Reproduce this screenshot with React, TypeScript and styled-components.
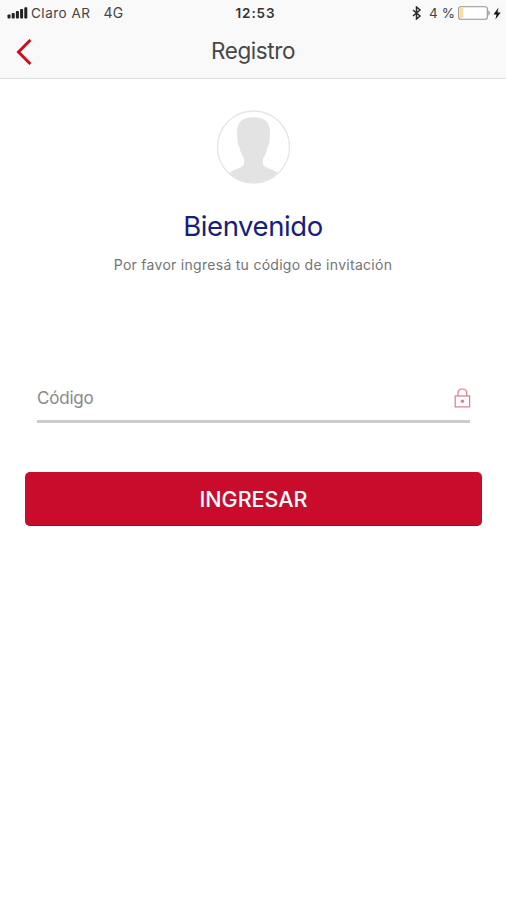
import React from "react";
import styled, { createGlobalStyle } from "styled-components";

const GlobalStyle = createGlobalStyle`
  * { box-sizing: border-box; }
  body { margin: 0; background: #fff; font-family: Inter, "Liberation Sans", sans-serif; }
`;

const Screen = styled.div`
  display: flex;
  flex-direction: column;
  width: 506px;
  height: 900px;
  overflow: hidden;
  background: #fff;
`;

const Header = styled.header`
  height: 79px;
  background: #f9f9f9;
  border-bottom: 1px solid #dedede;
`;

const StatusBar = styled.div`
  display: grid;
  grid-template-columns: 1fr auto 1fr;
  align-items: center;
  height: 26px;
  padding: 0 5px 0 7px;
  color: #444;
  font-size: 13.5px;
  line-height: 26px;
  white-space: pre;
`;

const StatusGroup = styled.div<{ $end?: boolean }>`
  display: flex;
  align-items: center;
  justify-content: ${(p) => (p.$end ? "flex-end" : "flex-start")};
  svg { display: block; flex: none; }
`;

const Carrier = styled.span`
  margin-left: 3px;
  letter-spacing: 0.5px;
`;

const Network = styled.span`
  margin-left: 13px;
  font-size: 14px;
  letter-spacing: 0.2px;
`;

const Clock = styled.span`
  padding-left: 3px;
  color: #333;
  font-weight: 600;
  letter-spacing: 0.9px;
`;

const Percent = styled.span`
  margin: 0 3px 0 7px;
  letter-spacing: 0.1px;
`;

const NavBar = styled.div`
  display: grid;
  grid-template-columns: 48px 1fr 48px;
  align-items: center;
  height: 52px;
`;

const BackButton = styled.button`
  display: flex;
  justify-content: center;
  padding: 0;
  border: 0;
  background: none;
`;

const Title = styled.h1`
  margin: -2px 0 0;
  text-align: center;
  color: #484848;
  font-size: 22.5px;
  line-height: 50px;
  font-weight: 400;
  letter-spacing: -0.4px;
`;

const Welcome = styled.section`
  display: flex;
  flex-direction: column;
  align-items: center;
  padding-top: 31px;
  svg { display: block; }
`;

const Heading = styled.h2`
  margin: 23px 0 0;
  color: #14207c;
  font-size: 27.5px;
  line-height: 36px;
  font-weight: 400;
  letter-spacing: -0.4px;
`;

const Subtitle = styled.p`
  margin: 11px 0 0;
  color: #747474;
  font-size: 14px;
  line-height: 20px;
  letter-spacing: 0.28px;
`;

const Form = styled.form`
  display: flex;
  flex-direction: column;
  padding: 101px 24px 0 25px;
`;

const Field = styled.label`
  display: flex;
  align-items: center;
  justify-content: space-between;
  height: 47px;
  margin: 0 12px;
  border-bottom: 3px solid #cbcbcb;
`;

const Placeholder = styled.span`
  color: #898989;
  font-size: 17px;
  line-height: 24px;
  letter-spacing: -0.2px;
`;

const LockSvg = styled.svg`
  display: block;
  margin-right: -1px;
`;

const Submit = styled.button`
  height: 54px;
  margin-top: 49px;
  padding: 0;
  border: 0;
  border-bottom: 1px solid #bd0010;
  border-radius: 5px;
  background: #c90c2c;
  color: #fff;
  font: 500 21.5px/55px Inter, "Liberation Sans", sans-serif;
`;

const SignalIcon = () => (
  <svg width="21" height="12" viewBox="0 0 21 12" fill="#222">
    <rect x="0.5" y="7.5" width="3" height="4" rx="0.8" />
    <rect x="4.7" y="6" width="3" height="5.5" rx="0.8" />
    <rect x="8.9" y="4" width="3" height="7.5" rx="0.8" />
    <rect x="13.1" y="2" width="3" height="9.5" rx="0.8" />
    <rect x="17.3" y="0.3" width="3" height="11.2" rx="0.8" />
  </svg>
);

const BluetoothIcon = () => (
  <svg width="10" height="14" viewBox="0 0 10 14" fill="none" stroke="#2a2a2a" strokeWidth="1.5">
    <path d="M1 4l7 6-3.500 3V1l3.500 3-7 6" />
  </svg>
);

const BatteryIcon = () => (
  <svg width="35" height="14" viewBox="0 0 35 14">
    <rect x="0.7" y="0.7" width="28.6" height="12.6" rx="2" fill="#fff" stroke="#939393" strokeWidth="1.1" />
    <rect x="2" y="2" width="3.2" height="10" rx="0.6" fill="#ffdf9f" />
    <path d="M30.3 4.5c2 .5 2 4.5 0 5z" fill="#939393" />
  </svg>
);

const BoltIcon = () => (
  <svg width="8" height="13" viewBox="0 0 8 13" fill="#161616">
    <path d="M5.5 0.5L0.5 7.4h3L2.4 12.5 7.7 5.600H4.500z" />
  </svg>
);

const BackIcon = () => (
  <svg width="16" height="26" viewBox="0 0 16 26" fill="none" stroke="#cb1020" strokeWidth="3">
    <path d="M14.4 1L2.5 13l11.900 12" />
  </svg>
);

const Avatar = () => (
  <svg width="74" height="75" viewBox="0 0 74 75">
    <defs>
      <clipPath id="avatarClip">
        <circle cx="37.5" cy="37" r="36" />
      </clipPath>
    </defs>
    <circle cx="37.5" cy="37" r="36" fill="#fff" stroke="#e5e5e5" strokeWidth="1.3" />
    <path
      clipPath="url(#avatarClip)"
      fill="#e3e3e3"
      transform="translate(-0.5 -0.3)"
      d="M38 7.500C27 7.500 22 12 21.500 22c0 2.500.1 4.500.6 7-.4 1-.2 2.500.3 4.500.4 2 1 3.500 1.900 4.500.7 5 2.200 8 4.200 10.500v6c-1.500 4-10 4.500-16 9.500v11h51V64c-6-5-14.500-5.500-16-9.500v-6c2-2.500 3.500-5.500 4.200-10.500.9-1 1.500-2.500 1.900-4.500.5-2 .7-3.500.3-4.500.5-2.500.6-4.500.6-7C54 12 49 7.500 38 7.500z"
    />
  </svg>
);

const LockIcon = () => (
  <LockSvg width="17" height="20" viewBox="0 0 17 20" fill="none" stroke="#e27a8c" strokeWidth="1.2">
    <rect x="1.2" y="8" width="14.400" height="10.900" />
    <path d="M4 8V5.500C4 2.800 5.700 1 8.400 1s4.400 1.800 4.400 4.500V8" />
    <circle cx="8.400" cy="13.200" r="1.700" fill="#e27a8c" stroke="none" />
  </LockSvg>
);

export default function App() {
  return (
    <Screen>
      <GlobalStyle />
      <Header>
        <StatusBar>
          <StatusGroup>
            <SignalIcon />
            <Carrier>Claro AR</Carrier>
            <Network>4G</Network>
          </StatusGroup>
          <Clock>12:53</Clock>
          <StatusGroup $end>
            <BluetoothIcon />
            <Percent>4 %</Percent>
            <BatteryIcon />
            <BoltIcon />
          </StatusGroup>
        </StatusBar>
        <NavBar>
          <BackButton type="button" aria-label="Volver">
            <BackIcon />
          </BackButton>
          <Title>Registro</Title>
        </NavBar>
      </Header>
      <Welcome>
        <Avatar />
        <Heading>Bienvenido</Heading>
        <Subtitle>Por favor ingresá tu código de invitación</Subtitle>
      </Welcome>
      <Form>
        <Field>
          <Placeholder>Código</Placeholder>
          <LockIcon />
        </Field>
        <Submit type="button">INGRESAR</Submit>
      </Form>
    </Screen>
  );
}
